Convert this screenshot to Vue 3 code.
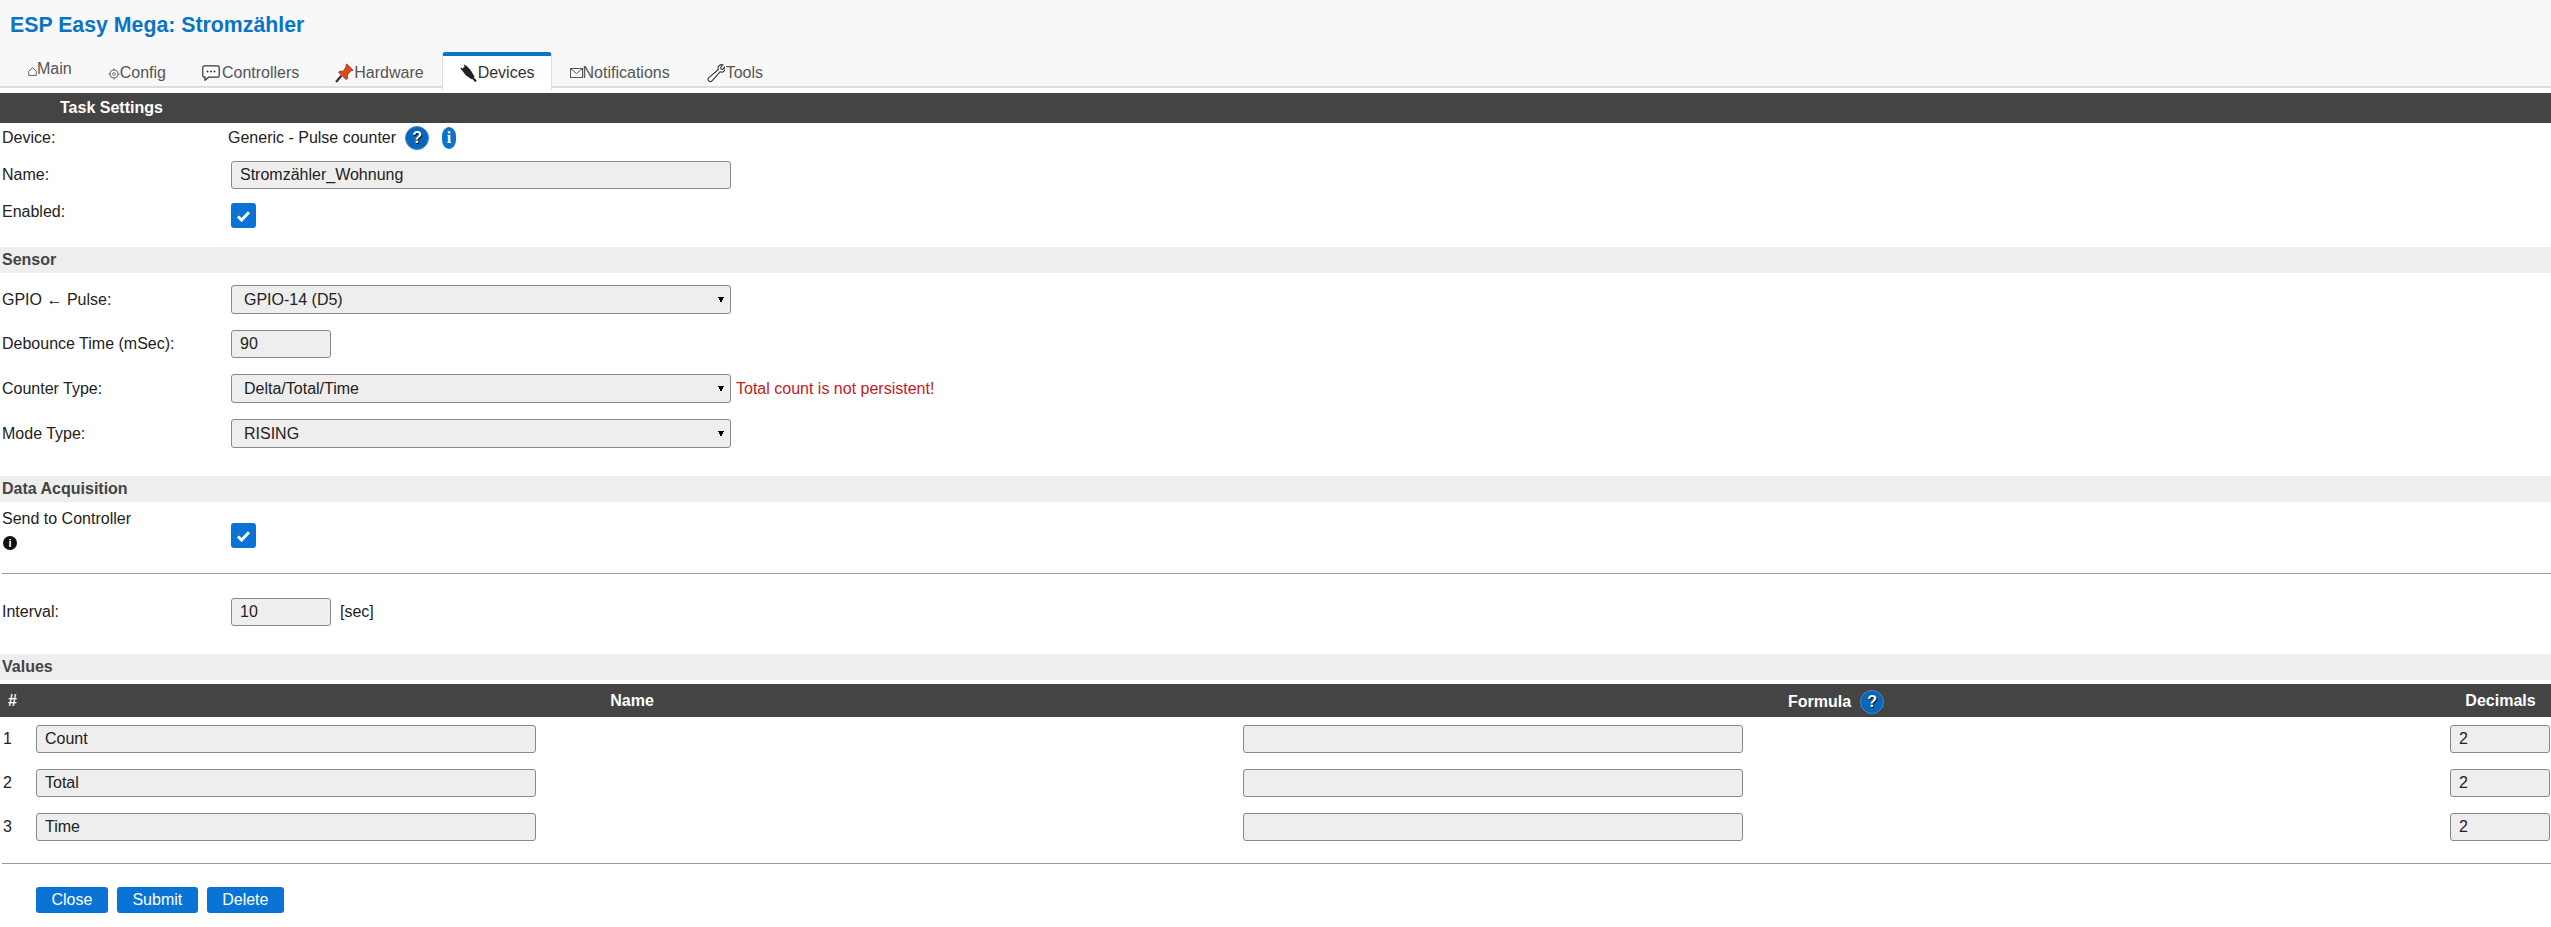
<script setup>
import { ref } from 'vue'

const tabs = ref([
  { name: 'Main', icon: 'main' },
  { name: 'Config', icon: 'config' },
  { name: 'Controllers', icon: 'controllers' },
  { name: 'Hardware', icon: 'hardware' },
  { name: 'Devices', icon: 'devices', active: true },
  { name: 'Notifications', icon: 'notifications' },
  { name: 'Tools', icon: 'tools' },
])

const sensorRows = [
  { label: 'GPIO ← Pulse:', type: 'select', value: 'GPIO-14 (D5)' },
  { label: 'Debounce Time (mSec):', type: 'input', value: '90' },
  { label: 'Counter Type:', type: 'select', value: 'Delta/Total/Time', note: 'Total count is not persistent!' },
  { label: 'Mode Type:', type: 'select', value: 'RISING' },
]

const values = [
  { id: 1, name: 'Count', formula: '', decimals: '2' },
  { id: 2, name: 'Total', formula: '', decimals: '2' },
  { id: 3, name: 'Time', formula: '', decimals: '2' },
]

const buttons = ['Close', 'Submit', 'Delete']
</script>

<template>
  <div class="page">
    <header class="top">
      <h1>ESP Easy Mega: Stromzähler</h1>
      <nav class="tabs">
        <a v-for="tab in tabs" :key="tab.name" class="tab" :class="[tab.icon, { active: tab.active }]">
          <svg v-if="tab.icon === 'main'" class="ic" width="9" height="9" viewBox="0 0 9 9" fill="none" stroke="#666">
            <path d="M.7 8.4V4.2L4.5.8l3.8 3.4v4.2z" />
          </svg>
          <svg v-else-if="tab.icon === 'config'" class="ic" width="12" height="12" viewBox="0 0 12 12" fill="none" stroke="#666">
            <circle cx="6" cy="6" r="4" stroke-width="1.1" />
            <circle cx="6" cy="6" r="1.4" stroke-width=".8" />
            <path d="M6 .5v1.4M6 10.1v1.4M.5 6h1.4M10.1 6h1.4" stroke-width="1.1" />
          </svg>
          <svg v-else-if="tab.icon === 'controllers'" class="ic" width="18" height="16" viewBox="0 0 18 16">
            <path d="M2.5.8h13a1.7 1.7 0 0 1 1.7 1.7v8a1.7 1.7 0 0 1-1.7 1.7H6.6L3 15.2v-3H2.5A1.7 1.7 0 0 1 .8 10.5v-8A1.7 1.7 0 0 1 2.5.8z" fill="#fff" stroke="#333" stroke-width="1.2" />
            <circle cx="5.5" cy="6.5" r="1" fill="#333" />
            <circle cx="9" cy="6.5" r="1" fill="#333" />
            <circle cx="12.5" cy="6.5" r="1" fill="#333" />
          </svg>
          <svg v-else-if="tab.icon === 'hardware'" class="ic" width="19" height="20" viewBox="0 0 18 19">
            <path d="M1 18l5-6" stroke="#333" stroke-width="2.2" />
            <path d="M11 .8l6.2 6.2-2.500.6-3 4 .4 3-1.400 1.200L3.300 8.900l1.400-1.300 3 .3 2.500-3.800z" fill="#dc4a1c" stroke="#8a3012" stroke-width=".7" />
          </svg>
          <svg v-else-if="tab.icon === 'devices'" class="ic" width="17" height="18" viewBox="0 0 17 18">
            <path d="M1.500 5.500L6 1.200l4.500 4.800 4 6.500-3 2.800-6-4.300z" fill="#222" />
            <path d="M12 13l4 4.500" stroke="#222" stroke-width="2" />
            <path d="M4 .8l2 2M.8 4l2 2" stroke="#222" stroke-width="1.2" />
          </svg>
          <svg v-else-if="tab.icon === 'notifications'" class="ic" width="13" height="10" viewBox="0 0 13 10" fill="none" stroke="#555">
            <rect x=".5" y=".5" width="12" height="9" />
            <path d="M.8.8L6.5 5.5 12.2.8" />
          </svg>
          <svg v-else class="ic" width="19" height="20" viewBox="0 0 19 20" fill="#fff" stroke="#333" stroke-width="1.1">
            <path d="M12.3 6.500a3.600 3.600 0 0 1 4.700-4.600l-2.300 2.300.3 1.800 1.800.4 2-2.300a3.600 3.600 0 0 1-4.800 4.700l-8 9a2.200 2.200 0 0 1-3.300-3z" />
          </svg>
          <span>{{ tab.name }}</span>
        </a>
      </nav>
    </header>

    <div class="heading">Task Settings</div>
    <div class="row device">
      <label>Device:</label>
      <div class="val">
        <span class="device-name">Generic - Pulse counter</span>
        <span class="help">?</span>
        <span class="info">i</span>
      </div>
    </div>
    <div class="row name">
      <label>Name:</label>
      <input class="field wide" value="Stromzähler_Wohnung" />
    </div>
    <div class="row enabled">
      <label>Enabled:</label>
      <span class="check"><svg width="15" height="12" viewBox="0 0 15 12"><path d="M2 6.500l3.600 3.500L13 2.200" fill="none" stroke="#fff" stroke-width="3" /></svg></span>
    </div>

    <div class="section">Sensor</div>
    <div class="sensor">
      <div v-for="item in sensorRows" :key="item.label" class="row sensor-row">
        <label>{{ item.label }}</label>
        <select v-if="item.type === 'select'" class="field wide pick">
          <option>{{ item.value }}</option>
        </select>
        <input v-else class="field small" :value="item.value" />
        <span v-if="item.note" class="note">{{ item.note }}</span>
      </div>
    </div>

    <div class="section acquisition">Data Acquisition</div>
    <div class="row send">
      <label>Send to Controller<i class="dot">i</i></label>
      <span class="check"><svg width="15" height="12" viewBox="0 0 15 12"><path d="M2 6.500l3.600 3.500L13 2.200" fill="none" stroke="#fff" stroke-width="3" /></svg></span>
    </div>
    <hr />
    <div class="row interval">
      <label>Interval:</label>
      <input class="field small" value="10" />
      <span class="unit">[sec]</span>
    </div>

    <div class="section">Values</div>
    <div class="table">
      <div class="cell th">#</div>
      <div class="cell th center name-head">Name</div>
      <div class="cell th center formula">Formula <span class="help">?</span></div>
      <div class="cell th center">Decimals</div>
      <template v-for="v in values" :key="v.id">
        <div class="cell num">{{ v.id }}</div>
        <div class="cell"><input class="field wide" :value="v.name" /></div>
        <div class="cell form-cell"><input class="field wide" :value="v.formula" /></div>
        <div class="cell"><input class="field small" :value="v.decimals" /></div>
      </template>
    </div>
    <hr class="last" />
    <div class="buttons">
      <a v-for="b in buttons" :key="b" class="btn">{{ b }}</a>
    </div>
  </div>
</template>

<style scoped>
.page {
  font-family: "Liberation Sans", Arial, sans-serif;
  font-size: 16px;
  color: #222;
  min-height: 927px;
  background: #fff;
}

.top {
  background: #f8f8f8;
  border-bottom: 2px solid #ddd;
  height: 85px;
  padding-top: 1px;
}

h1 {
  margin: 0;
  padding: 11px 0 0 10px;
  font-size: 21.3px;
  line-height: 26px;
  color: #0a74c6;
  height: 40px;
  box-sizing: border-box;
}

.tabs {
  display: flex;
  margin-top: 11px;
  padding-left: 10px;
  height: 38px;
}

.tab {
  display: flex;
  align-items: center;
  padding: 0 18px;
  height: 38px;
  color: #555;
  box-sizing: border-box;
  border-top: 4px solid transparent;
}

.tab .ic {
  flex: none;
}

.tab.main {
  padding-bottom: 8px;
}

.tab.main .ic {
  margin-top: 4px;
}

.tab.config .ic {
  margin-top: 2px;
}

.tab.controllers .ic {
  margin-right: 2px;
}

.tab.devices .ic,
.tab.tools .ic {
  margin-right: 1px;
}

.tab.active {
  position: relative;
  z-index: 1;
  background: #fff;
  color: #333;
  border-top-color: #0a74c6;
  border-left: 1px solid #ddd;
  border-right: 1px solid #ddd;
  border-radius: 4px 4px 0 0;
  padding: 0 16px 0 17px;
}

.heading {
  margin-top: 5px;
  height: 30px;
  line-height: 29px;
  padding-left: 60px;
  background: #444;
  color: #fff;
  font-weight: bold;
}

.row {
  display: flex;
  padding-left: 2px;
}

.row label {
  width: 229px;
  flex: none;
}

.device {
  height: 30px;
  align-items: center;
}

.val {
  display: flex;
  align-items: center;
  margin-left: -3px;
}

.device-name {
  margin-right: 9px;
}

.help {
  display: inline-block;
  width: 24px;
  height: 24px;
  line-height: 22px;
  box-sizing: border-box;
  border: 1px solid #3a8bd0;
  border-radius: 50%;
  background: #0a66bb;
  color: #fff;
  font-weight: bold;
  text-align: center;
  text-shadow: 1px 1px 0 #000;
}

.info {
  margin-left: 13px;
  width: 14px;
  height: 22px;
  border-radius: 7px / 9px;
  background: #0a74c6;
  color: #fff;
  font: bold 16px/22px "Liberation Serif", serif;
  text-align: center;
}

.name {
  height: 44px;
  align-items: center;
}

.enabled {
  height: 50px;
  padding-top: 6px;
  box-sizing: border-box;
}

.check {
  display: flex;
  align-items: center;
  justify-content: center;
  width: 25px;
  height: 25px;
  border-radius: 3px;
  background: #0a74d6;
}

.section {
  height: 26px;
  line-height: 25px;
  padding-left: 2px;
  background: #eee;
  color: #444;
  font-weight: bold;
}

.field {
  height: 28px;
  box-sizing: border-box;
  border: 1px solid #888;
  border-radius: 3px;
  background: #eee;
  color: #222;
  padding: 0 8px;
  font: inherit;
  outline: none;
}

.wide {
  width: 500px;
}

.small {
  width: 100px;
}

.pick {
  height: 29px;
  padding: 0 12px;
  appearance: none;
  background-color: #eee;
  background-image: linear-gradient(to bottom left, #000 50%, transparent 50%), linear-gradient(to bottom right, #000 50%, transparent 50%);
  background-size: 3px 6px;
  background-repeat: no-repeat;
  background-position: calc(100% - 9px) center, calc(100% - 6px) center;
}

.sensor {
  display: flex;
  flex-direction: column;
  gap: 16px;
  padding-top: 12px;
}

.sensor-row {
  align-items: center;
}

.note {
  margin-left: 5px;
  color: #c01a28;
}

.acquisition {
  margin-top: 28px;
}

.send {
  height: 71px;
}

.send label {
  padding-top: 7px;
  line-height: 20px;
}

.send .check {
  margin-top: 21px;
}

.dot {
  display: block;
  width: 14px;
  height: 14px;
  margin: 7px 0 0 1px;
  border-radius: 50%;
  background: #111;
  color: #fff;
  font: bold 11px/14px "Liberation Sans", Arial, sans-serif;
  text-align: center;
}

hr {
  height: 1px;
  margin: 0 0 0 2px;
  border: 0;
  background: #999;
}

.interval {
  align-items: center;
  padding-top: 24px;
  padding-bottom: 28px;
}

.unit {
  margin-left: 9px;
}

.table {
  display: grid;
  grid-template-columns: 36px 1204px 1210px 1fr;
  grid-template-rows: 33px repeat(3, 44px);
  margin-top: 4px;
}

.cell {
  display: flex;
  align-items: center;
}

.cell:not(.th) {
  padding-top: 8px;
  height: 36px;
  box-sizing: border-box;
}

.th {
  background: #444;
  color: #fff;
  font-weight: bold;
}

.th:first-child {
  padding-left: 8px;
}

.center {
  justify-content: center;
}

.name-head {
  padding-right: 12px;
}

.formula {
  padding-right: 18px;
  gap: 9px;
  padding-top: 3px;
  box-sizing: border-box;
}

.num {
  padding-left: 3px;
}

.form-cell {
  padding-left: 3px;
}

hr.last {
  margin-top: 14px;
}

.buttons {
  display: flex;
  gap: 9px;
  margin: 23px 0 0 36px;
}

.btn {
  height: 26px;
  line-height: 26px;
  padding: 0 15.5px;
  border-radius: 3px;
  background: #0a74d6;
  color: #fff;
}
</style>
